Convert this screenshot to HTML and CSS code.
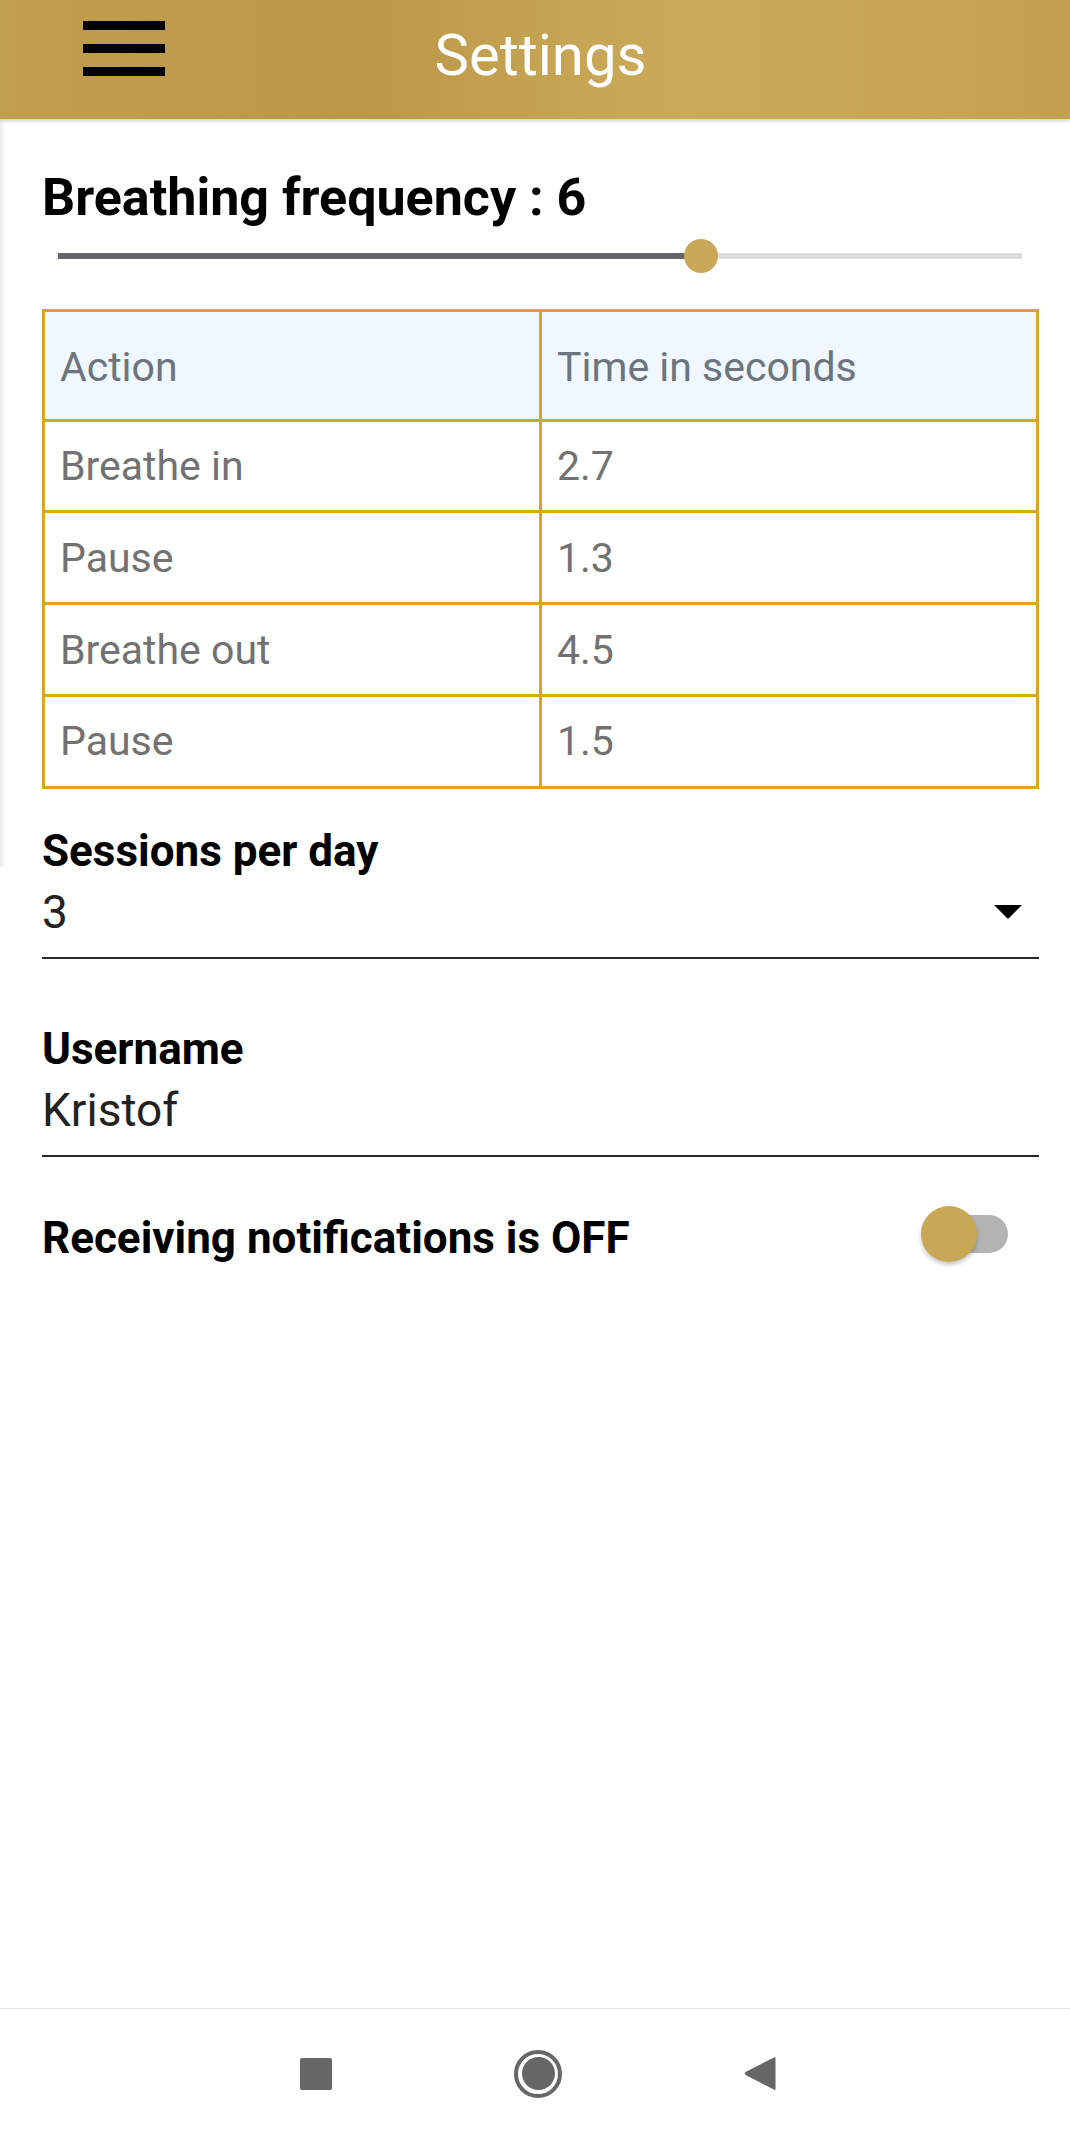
FILE: index.html
```html
<!DOCTYPE html>
<html lang="en">
<head>
<meta charset="utf-8">
<title>Settings</title>
<link rel="stylesheet" href="styles.css">
</head>
<body>
<div class="screen">
  <header class="appbar">
    <div class="burger" aria-label="Menu">
      <span class="bar"></span><span class="bar"></span><span class="bar"></span>
    </div>
    <h1 class="appbar-title">Settings</h1>
    <div class="appbar-spacer"></div>
  </header>

  <main class="content">
    <h2 class="freq-title">Breathing frequency : 6</h2>
    <div class="slider">
      <div class="track">
        <div class="track-fill" style="width: 66.7%"></div>
        <div class="track-rest"></div>
        <div class="thumb" style="left: 66.7%"></div>
      </div>
    </div>

    <table class="times">
      <thead>
        <tr><th>Action</th><th>Time in seconds</th></tr>
      </thead>
      <tbody>
        <tr><td>Breathe in</td><td>2.7</td></tr>
        <tr><td>Pause</td><td>1.3</td></tr>
        <tr><td>Breathe out</td><td>4.5</td></tr>
        <tr><td>Pause</td><td>1.5</td></tr>
      </tbody>
    </table>

    <div class="field field-first">
      <div class="field-label">Sessions per day</div>
      <div class="field-value">
        <span>3</span>
        <span class="caret"></span>
      </div>
    </div>

    <div class="field">
      <div class="field-label">Username</div>
      <div class="field-value"><span>Kristof</span></div>
    </div>

    <div class="notif-row">
      <div class="field-label notif-label">Receiving notifications is OFF</div>
      <div class="switch">
        <div class="switch-track"></div>
        <div class="switch-thumb"></div>
      </div>
    </div>
  </main>

  <nav class="sysnav">
    <span class="nav-square"></span>
    <span class="nav-home"><span class="nav-home-dot"></span></span>
    <svg class="nav-back" width="32" height="37" viewBox="0 0 32 37">
      <path d="M30 2.5 Q31.5 1 31.5 3.5 L31.5 33.5 Q31.5 36 30 34.5 L1.5 20 Q0 18.5 1.5 17 Z" fill="#666"/>
    </svg>
  </nav>
</div>
</body>
</html>
```

FILE: styles.css
```css
* { box-sizing: border-box; }

html, body {
  margin: 0;
  padding: 0;
  background: #ffffff;
}

body {
  font-family: Roboto, "Liberation Sans", Arial, sans-serif;
  color: #000;
}

.screen {
  min-height: 100vh;
  display: flex;
  flex-direction: column;
}

/* ---------- App bar ---------- */
.appbar {
  height: 119px;
  display: grid;
  grid-template-columns: 1fr auto 1fr;
  align-items: center;
  background: linear-gradient(90deg, #bf9e4e 0%, #c09d4c 4%, #bb9847 34%, #cbab5a 64%, #c4a152 100%);
  box-shadow: 0 2px 4px rgba(0, 0, 0, 0.18);
  position: relative;
  z-index: 2;
}

.burger {
  justify-self: start;
  align-self: start;
  margin-left: 83px;
  margin-top: 21px;
  display: flex;
  flex-direction: column;
  gap: 14px;
}

.bar {
  display: block;
  width: 82px;
  height: 9px;
  background: #000;
}

.appbar-title {
  margin: 0 0 10px 11px;
  font-size: 58px;
  font-weight: 400;
  color: #fff;
  line-height: normal;
}

/* ---------- Content ---------- */
.content {
  position: relative;
  padding: 48px 31px 0 42px;
}

.content::before {
  content: "";
  position: absolute;
  left: 0;
  top: 0;
  width: 6px;
  height: 748px;
  background: linear-gradient(90deg, #ebebeb, rgba(240, 240, 240, 0));
}

.freq-title {
  margin: 0;
  font-size: 52px;
  font-weight: 700;
  line-height: 61px;
  color: #000;
}

.slider {
  margin-top: 11px;
  height: 34px;
  padding: 0 17px 0 16px;
  display: flex;
  align-items: center;
}

.track {
  position: relative;
  flex: 1;
  height: 6px;
  display: flex;
}

.track-fill {
  height: 6px;
  background: #63666b;
}

.track-rest {
  flex: 1;
  height: 6px;
  background: #dcdcdc;
}

.thumb {
  position: absolute;
  top: 50%;
  width: 34px;
  height: 34px;
  margin: -17px 0 0 -17px;
  border-radius: 50%;
  background: #c9a85a;
}

/* ---------- Table ---------- */
.times {
  margin-top: 36px;
  width: 100%;
  border-collapse: collapse;
  table-layout: fixed;
  border: 3px solid #daa520;
}

.times th,
.times td {
  border: 3px solid #daa520;
  text-align: left;
  font-size: 41px;
  line-height: 47px;
  padding: 21.5px 15px 20.25px 15px;
  color: #727272;
  font-weight: 400;
}

.times th {
  background: #f0f7ff;
  color: #6c757d;
  padding-top: 31.5px;
  padding-bottom: 28px;
}

/* ---------- Fields ---------- */
.field {
  margin-top: 64px;
  border-bottom: 2px solid #2a2a2a;
  padding-bottom: 18px;
}

.field-first {
  margin-top: 36px;
}

.field-label {
  font-size: 44px;
  font-weight: 700;
  line-height: normal;
  color: #000;
}

.field-value {
  margin-top: 8px;
  display: flex;
  align-items: center;
  justify-content: space-between;
  font-size: 46px;
  line-height: normal;
  color: #222;
}

.caret {
  width: 0;
  height: 0;
  margin-right: 17px;
  border-left: 14.5px solid transparent;
  border-right: 14.5px solid transparent;
  border-top: 14px solid #000;
}

.notif-row {
  margin-top: 49px;
  display: flex;
  justify-content: space-between;
  align-items: flex-start;
}

.notif-label {
  margin-top: 6.5px;
}

.switch {
  position: relative;
  width: 87px;
  height: 56px;
  margin-right: 31px;
}

.switch-track {
  position: absolute;
  right: 0;
  top: 9px;
  width: 74px;
  height: 38px;
  border-radius: 19px;
  background: #b3b3b3;
}

.switch-thumb {
  position: absolute;
  left: 0;
  top: 0;
  width: 56px;
  height: 56px;
  border-radius: 50%;
  background: #c8a855;
  box-shadow: 0 3px 4px rgba(0, 0, 0, 0.22);
}

/* ---------- System nav ---------- */
.sysnav {
  margin-top: auto;
  height: 130px;
  border-top: 1px solid #e4e4e4;
  display: flex;
  align-items: center;
  justify-content: center;
  gap: 182px;
  padding-left: 6px;
}

.nav-square {
  width: 32px;
  height: 32px;
  border-radius: 2px;
  background: #666;
}

.nav-home {
  width: 48px;
  height: 48px;
  border-radius: 50%;
  border: 4px solid #666;
  display: flex;
  align-items: center;
  justify-content: center;
}

.nav-home-dot {
  width: 33px;
  height: 33px;
  border-radius: 50%;
  background: #666;
}

.nav-back {
  display: block;
}
```
